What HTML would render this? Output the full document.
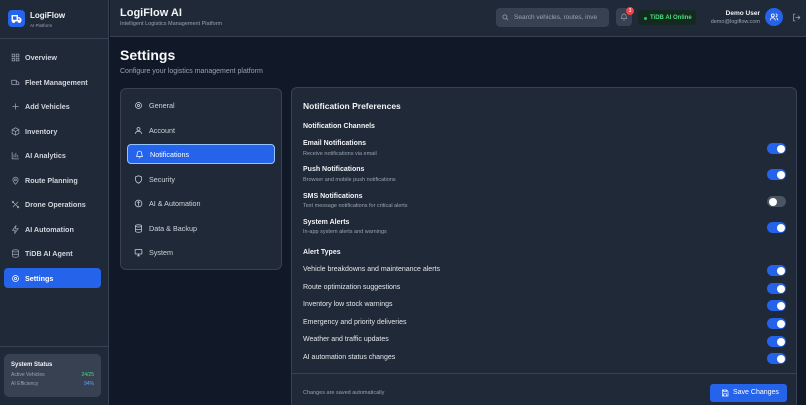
<!DOCTYPE html>
<html><head><meta charset="utf-8"><style>
*{box-sizing:border-box;margin:0;padding:0}
html{overflow:hidden;width:806px;height:405px}
body{width:806px;height:405px;overflow:hidden;background:#111827;font-family:"Liberation Sans",sans-serif;color:#e5e7eb;position:relative}
.sb{position:absolute;left:0;top:0;width:109px;height:405px;background:#1f2937;border-right:1px solid #374151}
.logo{height:39px;border-bottom:1px solid #374151;position:relative}
.lb{position:absolute;left:8px;top:10px;width:17px;height:17px;background:#2563eb;border-radius:4px}
.nav{position:absolute;left:4px;width:97px;height:20px;font-size:7.2px;font-weight:bold;color:#d1d5db;display:flex;align-items:center;padding-left:7px;border-radius:4px}
.nav svg{width:9px;height:9px;margin-right:5px;stroke:#9ca3af;fill:none;stroke-width:2}
.nav.act{background:#2563eb;color:#fff}.nav.act svg{stroke:#fff}
.ss{position:absolute;left:4px;top:354px;width:97px;height:43px;background:#374151;border-radius:5px;font-size:5px;color:#9ca3af;padding:8px 7px}
.hd{position:absolute;left:110px;top:0;right:0;height:37px;background:#1f2937;border-bottom:1px solid #374151}
.card{position:absolute;background:#1f2937;border:1px solid #374151;border-radius:6px}
.sn{position:absolute;left:6px;width:148px;height:20px;font-size:7.2px;color:#d1d5db;display:flex;align-items:center;padding-left:7px;border-radius:4px}
.sn svg{width:9px;height:9px;margin-right:6px;stroke:#d1d5db;fill:none;stroke-width:2}
.sn.act{background:#2563eb;color:#fff;border:1px solid #93c5fd}.sn.act svg{stroke:#fff}
.tg{position:absolute;left:475px;width:19px;height:11px;border-radius:6px;background:#2563eb}
.tg::after{content:"";position:absolute;right:1.5px;top:1.5px;width:8px;height:8px;border-radius:50%;background:#fff}
.tg.off{background:#4b5563}.tg.off::after{right:auto;left:1.5px}
.t{position:absolute;left:11px;white-space:nowrap}
.lab{font-size:7px;font-weight:bold;color:#f3f4f6}
.sub{font-size:5.5px;color:#9ca3af}
.al{font-size:7px;color:#e5e7eb}
</style></head><body>
<div class="sb">
 <div class="logo"><div class="lb"><svg viewBox="0 0 24 24" width="17" height="17" fill="none" stroke="#fff" stroke-width="2"><path d="M6 8h7v7H6zM13 11h3l2 2v2h-5"/><circle cx="8" cy="16" r="1.3"/><circle cx="16" cy="16" r="1.3"/></svg></div>
 <div style="position:absolute;left:30px;top:11px;font-size:8px;font-weight:bold;color:#f3f4f6">LogiFlow</div>
 <div style="position:absolute;left:30px;top:23px;font-size:4.5px;color:#9ca3af">AI Platform</div></div>
 <div class="nav" style="top:47px"><svg viewBox="0 0 24 24"><rect x="3" y="3" width="7" height="7"/><rect x="14" y="3" width="7" height="7"/><rect x="3" y="14" width="7" height="7"/><rect x="14" y="14" width="7" height="7"/></svg>Overview</div>
 <div class="nav" style="top:72px"><svg viewBox="0 0 24 24"><path d="M2 6h12v11H2zM14 10h4l3 3v4h-7"/></svg>Fleet Management</div>
 <div class="nav" style="top:96px"><svg viewBox="0 0 24 24"><path d="M12 4v16M4 12h16"/></svg>Add Vehicles</div>
 <div class="nav" style="top:121px"><svg viewBox="0 0 24 24"><path d="M12 2l9 5v10l-9 5-9-5V7zM3 7l9 5 9-5M12 12v10"/></svg>Inventory</div>
 <div class="nav" style="top:145px"><svg viewBox="0 0 24 24"><path d="M3 3v18h18M8 17V9M13 17V5M18 17v-6"/></svg>AI Analytics</div>
 <div class="nav" style="top:170px"><svg viewBox="0 0 24 24"><path d="M12 22s7-7 7-12a7 7 0 0 0-14 0c0 5 7 12 7 12z"/><circle cx="12" cy="10" r="2.5"/></svg>Route Planning</div>
 <div class="nav" style="top:194px"><svg viewBox="0 0 24 24"><path d="M5 5l14 14M19 5L5 19"/><circle cx="5" cy="5" r="2"/><circle cx="19" cy="19" r="2"/></svg>Drone Operations</div>
 <div class="nav" style="top:219px"><svg viewBox="0 0 24 24"><path d="M13 2L4 14h7l-1 8 9-12h-7z"/></svg>AI Automation</div>
 <div class="nav" style="top:243px"><svg viewBox="0 0 24 24"><ellipse cx="12" cy="5" rx="8" ry="3"/><path d="M4 5v14c0 1.7 3.6 3 8 3s8-1.3 8-3V5M4 12c0 1.7 3.6 3 8 3s8-1.3 8-3"/></svg>TiDB AI Agent</div>
 <div class="nav act" style="top:268px"><svg viewBox="0 0 24 24"><circle cx="12" cy="12" r="3"/><circle cx="12" cy="12" r="8"/></svg>Settings</div>
 <div style="position:absolute;left:0;right:0;top:346px;border-top:1px solid #374151"></div>
 <div class="ss"><div style="font-size:6px;font-weight:bold;color:#f3f4f6;margin-bottom:4px">System Status</div>
 <div style="display:flex;justify-content:space-between;margin-bottom:3px"><span>Active Vehicles</span><span style="color:#4ade80">24/25</span></div>
 <div style="display:flex;justify-content:space-between"><span>AI Efficiency</span><span style="color:#60a5fa">94%</span></div></div>
</div>
<div class="hd">
 <div style="position:absolute;left:10px;top:7px;font-size:11px;font-weight:bold;color:#f3f4f6">LogiFlow AI</div>
 <div style="position:absolute;left:10px;top:21px;font-size:5.5px;color:#9ca3af">Intelligent Logistics Management Platform</div>
 <div style="position:absolute;left:386px;top:8px;width:113px;height:19px;background:#374151;border-radius:4px;font-size:6.5px;color:#9ca3af;padding:6px 0 0 18px;overflow:hidden;white-space:nowrap">Search vehicles, routes, inve<svg style="position:absolute;left:6px;top:6px" width="7" height="7" viewBox="0 0 24 24" fill="none" stroke="#9ca3af" stroke-width="2.5"><circle cx="10" cy="10" r="7"/><path d="M15 15l6 6"/></svg></div>
 <div style="position:absolute;left:506px;top:8px;width:16px;height:18px;background:#374151;border-radius:4px"><svg style="position:absolute;left:4px;top:5px" width="8" height="8" viewBox="0 0 24 24" fill="none" stroke="#9ca3af" stroke-width="2"><path d="M6 9a6 6 0 0 1 12 0c0 7 3 8 3 8H3s3-1 3-8M10 21h4"/></svg><div style="position:absolute;left:10px;top:-1px;width:8px;height:8px;border-radius:50%;background:#ef4444;font-size:5px;color:#fff;text-align:center;line-height:8px">3</div></div>
 <div style="position:absolute;left:528px;top:10px;width:58px;height:15px;background:#14291f;border-radius:3px;font-size:6px;font-weight:bold;color:#4ade80;padding:4.5px 0 0 12px">TiDB AI Online<span style="position:absolute;left:6px;top:6.5px;width:3px;height:3px;border-radius:50%;background:#22c55e"></span></div>
 <div style="position:absolute;right:46px;top:10px;font-size:6.5px;font-weight:bold;color:#f3f4f6;text-align:right">Demo User</div>
 <div style="position:absolute;right:46px;top:19px;font-size:5.5px;color:#9ca3af">demo@logiflow.com</div>
 <div style="position:absolute;left:655px;top:8px;width:18px;height:18px;border-radius:50%;background:#2563eb"><svg style="position:absolute;left:4px;top:4px" width="10" height="10" viewBox="0 0 24 24" fill="none" stroke="#fff" stroke-width="2"><circle cx="9" cy="8" r="3.5"/><path d="M3 20c0-4 3-6 6-6s6 2 6 6M16 4.5a3.5 3.5 0 0 1 0 7M18 14c2 1 3 3 3 6"/></svg></div>
 <svg style="position:absolute;left:682px;top:13px" width="9" height="9" viewBox="0 0 24 24" fill="none" stroke="#9ca3af" stroke-width="2"><path d="M9 3H4v18h5M16 7l5 5-5 5M21 12H9"/></svg>
</div>
<div style="position:absolute;left:120px;top:47px;font-size:14px;font-weight:bold;color:#f9fafb">Settings</div>
<div style="position:absolute;left:120px;top:68px;font-size:7px;color:#9ca3af">Configure your logistics management platform</div>
<div class="card" style="left:120px;top:88px;width:162px;height:182px">
 <div class="sn" style="top:6px"><svg viewBox="0 0 24 24"><circle cx="12" cy="12" r="3"/><circle cx="12" cy="12" r="8"/></svg>General</div>
 <div class="sn" style="top:31px"><svg viewBox="0 0 24 24"><circle cx="12" cy="8" r="4"/><path d="M4 21c0-5 4-7 8-7s8 2 8 7"/></svg>Account</div>
 <div class="sn act" style="top:55px"><svg viewBox="0 0 24 24"><path d="M6 9a6 6 0 0 1 12 0c0 7 3 8 3 8H3s3-1 3-8M10 21h4"/></svg>Notifications</div>
 <div class="sn" style="top:80px"><svg viewBox="0 0 24 24"><path d="M12 2l8 3v7c0 5-4 8-8 10-4-2-8-5-8-10V5z"/></svg>Security</div>
 <div class="sn" style="top:104px"><svg viewBox="0 0 24 24"><circle cx="12" cy="12" r="9"/><path d="M12 6v12M9 10l3-3 3 3"/></svg>AI &amp; Automation</div>
 <div class="sn" style="top:129px"><svg viewBox="0 0 24 24"><ellipse cx="12" cy="5" rx="8" ry="3"/><path d="M4 5v14c0 1.7 3.6 3 8 3s8-1.3 8-3V5M4 12c0 1.7 3.6 3 8 3s8-1.3 8-3"/></svg>Data &amp; Backup</div>
 <div class="sn" style="top:153px"><svg viewBox="0 0 24 24"><rect x="3" y="4" width="18" height="12" rx="1"/><path d="M8 21h8M12 16v5"/></svg>System</div>
</div>
<div class="card" style="left:291px;top:87px;width:506px;height:318px;border-bottom:none;border-bottom-left-radius:0;border-bottom-right-radius:0">
 <div class="t" style="top:13px;font-size:8.5px;font-weight:bold;color:#f3f4f6">Notification Preferences</div>
 <div class="t lab" style="top:35px">Notification Channels</div>
 <div class="t lab" style="top:52px">Email Notifications</div><div class="t sub" style="top:63px">Receive notifications via email</div><div class="tg" style="top:55px"></div>
 <div class="t lab" style="top:78px">Push Notifications</div><div class="t sub" style="top:89px">Browser and mobile push notifications</div><div class="tg" style="top:81px"></div>
 <div class="t lab" style="top:105px">SMS Notifications</div><div class="t sub" style="top:115px">Text message notifications for critical alerts</div><div class="tg off" style="top:108px"></div>
 <div class="t lab" style="top:131px">System Alerts</div><div class="t sub" style="top:141px">In-app system alerts and warnings</div><div class="tg" style="top:134px"></div>
 <div class="t lab" style="top:161px">Alert Types</div>
 <div class="t al" style="top:178px">Vehicle breakdowns and maintenance alerts</div><div class="tg" style="top:177px"></div>
 <div class="t al" style="top:196px">Route optimization suggestions</div><div class="tg" style="top:195px"></div>
 <div class="t al" style="top:213px">Inventory low stock warnings</div><div class="tg" style="top:212px"></div>
 <div class="t al" style="top:231px">Emergency and priority deliveries</div><div class="tg" style="top:230px"></div>
 <div class="t al" style="top:248px">Weather and traffic updates</div><div class="tg" style="top:248px"></div>
 <div class="t al" style="top:266px">AI automation status changes</div><div class="tg" style="top:265px"></div>
 <div style="position:absolute;left:0;right:0;top:285px;border-top:1px solid #374151"></div>
 <div class="t sub" style="top:302px">Changes are saved automatically</div>
 <div style="position:absolute;left:418px;top:296px;width:77px;height:18px;background:#2563eb;border-radius:3px;font-size:7px;color:#fff;padding:5px 0 0 23px">Save Changes<svg style="position:absolute;left:11px;top:5px" width="8" height="8" viewBox="0 0 24 24" fill="none" stroke="#fff" stroke-width="2"><path d="M4 3h13l4 4v14H4zM8 3v5h8V3M8 21v-7h8v7"/></svg></div>
</div>
</body></html>
